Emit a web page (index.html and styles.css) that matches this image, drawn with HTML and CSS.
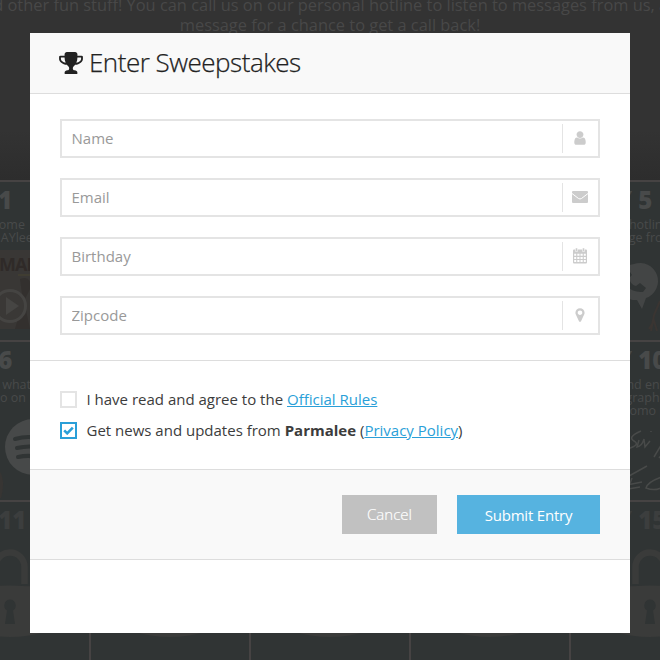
FILE: index.html
```html
<!DOCTYPE html>
<html lang="en">
<head>
  <meta charset="utf-8">
  <title>Enter Sweepstakes</title>
  <link rel="stylesheet" href="styles.css">
</head>
<body>

<svg class="defs" width="0" height="0">
  <symbol id="lock" viewBox="0 0 158 158">
    <path d="M64.500 82V65a14.500 14.500 0 0 1 29 0v17" fill="none" stroke="#3a3b3a" stroke-width="6.500"/>
    <path d="M41 86q38-5 76 0v43q-38 12-76 0z" fill="#3a3b3a"/>
    <path d="M79 97.500a6 6 0 0 1 3 11l2 13.500h-10l2-13.500a6 6 0 0 1 3-11z" fill="#303434"/>
  </symbol>
</svg>

<div class="page">
  <p class="intro">
    <span>videos, and other fun stuff! You can call us on our personal hotline to listen to messages from us, and leave a</span>
    <span>message for a chance to get a call back!</span>
  </p>
  <div class="days">
    <div class="day">
      <svg class="art" viewBox="0 0 158 158">
        <path d="M10 68h138v79H10z" fill="#393735"/>
        <path d="M89 97q12-4 10 10l-6 12 6 28H84l8-28z" fill="#33302e"/>
        <path d="M87 93h12" stroke="#403d32" stroke-width="2"/>
        <text x="68" y="89" class="cover">MALEE</text>
        <circle cx="79" cy="124" r="15.500" fill="#3a3836" stroke="#454442" stroke-width="3"/>
        <path d="M75 115l13 9-13 9z" fill="#464543"/>
      </svg>
      <h3>DAY 1</h3>
      <p>A big welcome<br>to a PARMAYlee</p>
    </div>
    <div class="day"></div><div class="day"></div><div class="day"></div>
    <div class="day">
      <svg class="art" viewBox="0 0 158 158">
        <path d="M63 82a18 18 0 0 1 12 34l-4 11-5-9a18 18 0 0 1-3-36z" fill="#434545"/>
        <path d="M51 90c2 15 9 20 21 20l3-4-6-5-4 3c-4-1-6-4-7-8l3-3-4-6z" fill="#303434"/>
        <path d="M89 119l-6 14-3 16M78 147l5-8 3 10" fill="none" stroke="#3a3532" stroke-width="2"/>
      </svg>
      <h3>DAY 5</h3>
      <p>Call our hotline for<br>a message from us</p>
    </div>

    <div class="day">
      <svg class="art" viewBox="0 0 158 158">
        <circle cx="102" cy="105" r="28" fill="#474949"/>
        <path d="M84 97q18-5 35 3M86 106q16-4 30 2M87 115q14-3 26 2" fill="none" stroke="#303434" stroke-width="4" stroke-linecap="round"/>
        <path d="M68 128q7 10 2 28h-8z" fill="#373533"/>
      </svg>
      <h3>DAY 6</h3>
      <p>Check out what<br>we listen to on</p>
    </div>
    <div class="day"></div><div class="day"></div><div class="day"></div>
    <div class="day">
      <svg class="art" viewBox="0 0 158 158">
        <path d="M70 89q-14 6-7 10t-7 8M68 98l-2 7q5-1 7-8l1 8 5-6M80 89v1M95 95l-12 20M95 108l-7 8M76 124l-18 10M56 143l15-3M61 136l-4 11 12-2M94 134q-17 5-19 12 10 4 18-2" fill="none" stroke="#484a49" stroke-width="1.500"/>
      </svg>
      <h3>DAY 10</h3>
      <p>Call in and enter for<br>an autographed<br>set of promo pics</p>
    </div>

    <div class="day locked"><svg class="art"><use href="#lock"/></svg><h3>DAY 11</h3></div>
    <div class="day locked"><svg class="art"><use href="#lock"/></svg></div>
    <div class="day locked"><svg class="art"><use href="#lock"/></svg></div>
    <div class="day locked"><svg class="art"><use href="#lock"/></svg></div>
    <div class="day locked"><svg class="art"><use href="#lock"/></svg><h3>DAY 15</h3></div>
  </div>
</div>

<form class="modal">
  <header class="modal-header">
    <svg class="trophy" viewBox="64 128 1664 1536"><path d="M522 883q-74-162-74-371h-256v96q0 78 94.500 162t235.500 113zm1078-275v-96h-256q0 209-74 371 141-29 235.500-113t94.500-162zm128-128v128q0 71-41.500 143t-112 130-173 97.500-215.500 44.500q-42 54-95 95-38 34-52.500 72.500t-14.500 89.500q0 54 30.500 91t97.500 37q75 0 133.500 45.500t58.500 114.500v64q0 14-9 23t-23 9h-832q-14 0-23-9t-9-23v-64q0-69 58.500-114.500t133.500-45.500q67 0 97.500-37t30.500-91q0-51-14.500-89.500t-52.500-72.500q-53-41-95-95-113-5-215.500-44.500t-173-97.500-112-130-41.500-143v-128q0-40 28-68t68-28h288v-96q0-66 47-113t113-47h576q66 0 113 47t47 113v96h288q40 0 68 28t28 68z"/></svg>
    <h1>Enter Sweepstakes</h1>
  </header>

  <div class="fields">
    <label class="field">
      <input type="text" placeholder="Name">
      <span class="icon"><svg viewBox="0 0 1792 1792"><path d="M1536 1399q0 109-62.500 187t-150.500 78h-854q-88 0-150.500-78t-62.500-187q0-85 8.500-160.500t31.500-152 58.500-131 94-89 134.500-34.500q131 128 313 128t313-128q76 0 134.500 34.500t94 89 58.500 131 31.500 152 8.500 160.500zm-256-887q0 159-112.500 271.500t-271.500 112.500-271.500-112.500-112.500-271.500 112.500-271.500 271.500-112.500 271.500 112.500 112.500 271.500z"/></svg></span>
    </label>
    <label class="field">
      <input type="text" placeholder="Email">
      <span class="icon"><svg viewBox="0 0 16 16"><rect y="2" width="16" height="12" rx="1"/><path d="M0 4.500l6.500 5q1.500 1 3 0l6.500-5" fill="none" stroke="#fff"/></svg></span>
    </label>
    <label class="field">
      <input type="text" placeholder="Birthday">
      <span class="icon"><svg viewBox="0 0 16 16"><path d="M2 1.500h12a1 1 0 0 1 1 1v12a1 1 0 0 1-1 1H2a1 1 0 0 1-1-1v-12a1 1 0 0 1 1-1z"/><path d="M3.500 0h2v3.500h-2zM10.500 0h2v3.500h-2z" stroke="#fff" stroke-width=".5"/><path d="M2.200 5.700h2v2h-2zM5.300 5.700h2.200v2H5.300zM8.500 5.700h2.200v2H8.500zM11.800 5.700h2v2h-2zM2.200 8.900h2v2h-2zM5.300 8.900h2.200v2H5.300zM8.500 8.900h2.200v2H8.500zM11.800 8.900h2v2h-2zM2.200 12.100h2v2h-2zM5.300 12.100h2.200v2H5.300zM8.500 12.100h2.200v2H8.500zM11.800 12.100h2v2h-2z" fill="#fff"/></svg></span>
    </label>
    <label class="field">
      <input type="text" placeholder="Zipcode">
      <span class="icon"><svg viewBox="0 0 1792 1792"><path d="M1152 640q0-106-75-181t-181-75-181 75-75 181 75 181 181 75 181-75 75-181zm256 0q0 109-33 179l-364 774q-16 33-47.500 52t-67.500 19-67.500-19-46.500-52l-365-774q-33-70-33-179 0-212 150-362t362-150 362 150 150 362z"/></svg></span>
    </label>
  </div>

  <div class="agreements">
    <div class="check">
      <span class="box"></span>
      <span>I have read and agree to the <a href="#">Official Rules</a></span>
    </div>
    <div class="check">
      <span class="box checked"><svg viewBox="0 0 11 9"><path d="M1.200 4.300l3 3L9.800 1.600" fill="none" stroke="#2a9fd8" stroke-width="2.600"/></svg></span>
      <span>Get news and updates from <b>Parmalee</b> (<a href="#">Privacy Policy</a>)</span>
    </div>
  </div>

  <footer class="modal-footer">
    <button type="button" class="btn cancel">Cancel</button>
    <button type="submit" class="btn submit">Submit Entry</button>
  </footer>
</form>

</body>
</html>
```

FILE: styles.css
```css
* { box-sizing: border-box; }
body {
    margin: 0;
    height: 660px;
    overflow: hidden;
    position: relative;
    background: #333;
    font-family: "Open Sans", "Noto Sans", sans-serif;
    font-size: 15px;
    color: #3c3c3c;
}
h1, h3, p { margin: 0; }
.defs { position: absolute; }

/* dimmed page behind the modal */
.page {
    height: 660px;
    overflow: hidden;
    display: flex;
    flex-direction: column;
    align-items: center;
    background: linear-gradient(#333 130px, #2d2d2d 180px);
}
.intro {
    flex: none;
    height: 180px;
    display: flex;
    flex-direction: column;
    align-items: center;
    margin-top: -5px;
    margin-bottom: 5px;
    font-size: 16.4px;
    line-height: 20px;
    color: #484848;
    white-space: nowrap;
}
.intro span:first-child { margin-left: 2px; }
.days {
    flex: none;
    display: grid;
    grid-template-columns: repeat(5, 158px);
    grid-auto-rows: 158px;
    gap: 2px;
    padding: 2px;
    background: #464343;
}
.day {
    position: relative;
    overflow: hidden;
    padding: 1px 10px;
    background: #303434;
    color: #484a4a;
    font-size: 12.5px;
    line-height: 13px;
    white-space: nowrap;
}
.day h3 {
    position: relative;
    font-size: 24px;
    font-weight: 800;
    line-height: 34px;
}
.day p {
    position: relative;
    padding-top: 1px;
}
.day.locked { color: #3c3e3e; }
.art {
    position: absolute;
    left: 0;
    top: 0;
    width: 158px;
    height: 158px;
}
.cover {
    font-size: 18px;
    font-weight: bold;
    letter-spacing: -1px;
    fill: #2f2a28;
}

.modal {
    position: absolute;
    left: 30px;
    top: 33px;
    width: 600px;
    height: 600px;
    background: #fff;
}
.modal-header {
    display: flex;
    align-items: center;
    gap: 6px;
    height: 61px;
    padding: 0 29px;
    background: #f9f9f9;
    border-bottom: 1px solid #ddd;
    color: #222;
}
.modal-header h1 {
    padding-bottom: 2px;
    font-size: 26px;
    font-weight: 300;
    letter-spacing: -.5px;
    line-height: 58px;
    -webkit-text-stroke: .25px #222;
}
.trophy {
    width: 24px;
    height: 22px;
    fill: #222;
}

.fields {
    display: flex;
    flex-direction: column;
    gap: 20px;
    padding: 25px 30px;
    border-bottom: 1px solid #ddd;
}
.field {
    display: flex;
    align-items: center;
    height: 39px;
    border: 2px solid #e4e4e4;
}
.field input {
    flex: 1;
    min-width: 0;
    border: 0;
    padding: 0 9px 2px 9.5px;
    background: none;
    outline: none;
    font: 15px "Open Sans", sans-serif;
}
.field input::placeholder { color: #999; }
.icon {
    width: 36px;
    height: 29px;
    display: flex;
    justify-content: center;
    border-left: 1px solid #e4e4e4;
    padding: 6px 2px 0 0;
}
.icon svg {
    width: 16px;
    height: 16px;
    fill: #ccc;
}

.agreements {
    display: flex;
    flex-direction: column;
    gap: 11px;
    height: 109px;
    padding: 28px 30px 0;
    border-bottom: 1px solid #ddd;
}
.check {
    display: flex;
    align-items: center;
    gap: 9.5px;
    height: 20px;
    line-height: 20px;
    white-space: nowrap;
}
.check a {
    color: #2a9fd8;
    text-decoration: underline;
}
.box {
    width: 17px;
    height: 17px;
    display: flex;
    align-items: center;
    justify-content: center;
    border: 2px solid #e4e4e4;
}
.box.checked { border-color: #2a9fd8; }
.box svg { width: 11px; height: 9px; }

.modal-footer {
    display: flex;
    justify-content: flex-end;
    gap: 20px;
    height: 90px;
    padding: 25px 30px;
    background: #f9f9f9;
    border-bottom: 1px solid #ddd;
}
.btn {
    height: 39px;
    border: 0;
    padding: 0;
    color: #fff;
    font: 15px "Open Sans", sans-serif;
}
.cancel {
    width: 95px;
    padding-bottom: 1px;
    background: #c1c1c1;
    font-weight: 300;
    -webkit-text-stroke: .2px #fff;
}
.submit {
    width: 143px;
    background: #56b3e0;
    letter-spacing: -.2px;
}
```
